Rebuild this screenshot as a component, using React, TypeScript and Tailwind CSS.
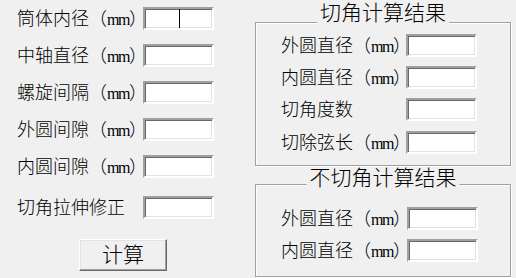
import React from 'react';

const font = { fontFamily: '"Liberation Serif", "Noto Sans CJK SC", serif' };

const TextBox = ({ caret }: { caret?: boolean }) => (
  <div className="relative w-[71px] h-[23px] shrink-0 bg-white border-2 border-t-[#a0a0a0] border-l-[#a0a0a0] border-b-white border-r-white shadow-[inset_1px_1px_0_#696969,inset_-1px_-1px_0_#e3e3e3]">
    {caret && <span className="absolute left-[34px] top-0 w-px h-[19px] bg-black" />}
  </div>
);

const Label = ({ text, mm, width }: { text: string; mm?: boolean; width: string }) => (
  <div className={`${width} shrink-0 whitespace-nowrap text-[18px] leading-none text-black font-light`}>
    {text}
    {mm && (
      <>
        （<span className="text-[16px] tracking-[-1.5px]">mm</span>）
      </>
    )}
  </div>
);

const Group = ({
  title,
  titleClass,
  className,
  children
}: {
  title: string;
  titleClass: string;
  className: string;
  children: React.ReactNode;
}) => (
  <div
    className={`relative w-[256px] border border-[#a0a0a0] shadow-[inset_1px_1px_0_#fff,1px_1px_0_#fff] ${className}`}
  >
    <span
      className={`absolute left-1/2 -translate-x-1/2 bg-[#f0f0f0] px-[3px] text-[21px] leading-none whitespace-nowrap text-black font-light ${titleClass}`}
    >
      {title}
    </span>
    {children}
  </div>
);

export default function App() {
  const leftRows = ['筒体内径', '中轴直径', '螺旋间隔', '外圆间隙', '内圆间隙'];

  return (
    <div className="w-[516px] h-[278px] bg-[#f0f0f0] flex overflow-hidden" style={font}>
      {/* left inputs */}
      <div className="pl-[17px] pt-[7px] flex flex-col">
        <div className="flex flex-col gap-[14px]">
          {leftRows.map((r, i) => (
            <div key={r} className="flex items-center h-[23px]">
              <Label text={r} mm width="w-[126px]" />
              <TextBox caret={i === 0} />
            </div>
          ))}
        </div>
        <div className="flex items-center h-[23px] mt-[18px]">
          <Label text="切角拉伸修正" width="w-[126px]" />
          <TextBox />
        </div>
        <button className="mt-[20px] ml-[62px] w-[88px] h-[32px] bg-[#f0f0f0] border border-t-white border-l-white border-b-[#696969] border-r-[#696969] shadow-[inset_-1px_-1px_0_#a0a0a0,inset_1px_1px_0_#e3e3e3] text-[21px] leading-none text-black font-light">
          计算
        </button>
      </div>

      {/* results */}
      <div className="ml-[41px] pt-[22px] flex flex-col">
        <Group title="切角计算结果" titleClass="-top-[20px]" className="h-[144px] pl-[25px] pt-[11px]">
          <div className="flex flex-col gap-[9px]">
            <div className="flex items-center h-[23px]">
              <Label text="外圆直径" mm width="w-[125px]" />
              <TextBox />
            </div>
            <div className="flex items-center h-[23px]">
              <Label text="内圆直径" mm width="w-[125px]" />
              <TextBox />
            </div>
            <div className="flex items-center h-[23px]">
              <Label text="切角度数" width="w-[125px]" />
              <TextBox />
            </div>
            <div className="flex items-center h-[23px] mt-[1px]">
              <Label text="切除弦长" mm width="w-[125px]" />
              <TextBox />
            </div>
          </div>
        </Group>
        <Group title="不切角计算结果" titleClass="-top-[17px]" className="mt-[18px] h-[93px] pl-[25px] pt-[22px]">
          <div className="flex flex-col gap-[9px]">
            <div className="flex items-center h-[23px]">
              <Label text="外圆直径" mm width="w-[126px]" />
              <TextBox />
            </div>
            <div className="flex items-center h-[23px]">
              <Label text="内圆直径" mm width="w-[126px]" />
              <TextBox />
            </div>
          </div>
        </Group>
      </div>
    </div>
  );
}
